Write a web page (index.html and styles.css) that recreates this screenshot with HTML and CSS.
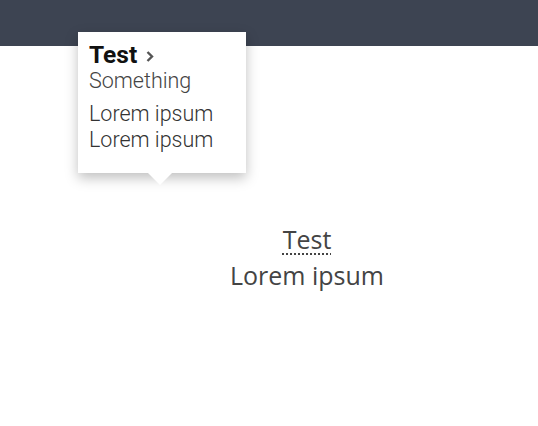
FILE: index.html
```html
<!DOCTYPE html>
<html lang="en">
<head>
  <meta charset="UTF-8" />
  <title>Popover</title>
  <link rel="stylesheet" href="styles.css">
</head>
<body>
  <header class="topbar"></header>

  <main class="content">
    <div class="target">
      <abbr class="term">Test</abbr>
      <div class="value">Lorem ipsum</div>
    </div>
  </main>

  <div class="popover">
    <div class="popover-title">Test <span class="chev">
      <svg width="10" height="13" viewBox="0 0 10 13"><path d="M2.5 2 L7 6.5 L2.5 11" fill="none" stroke="#555" stroke-width="2.4"/></svg>
    </span></div>
    <div class="popover-sub">Something</div>
    <div class="popover-body">
      <div>Lorem ipsum</div>
      <div>Lorem ipsum</div>
    </div>
  </div>
</body>
</html>
```

FILE: styles.css
```css
* { box-sizing: border-box; }
body {
  margin: 0;
  background: #fff;
  font-family: Roboto, sans-serif;
  min-height: 426px;
}
.topbar {
  height: 46px;
  background: #3d4452;
}
.content {
  display: flex;
  justify-content: center;
  padding: 175px 0 0 76px;
}
.target {
  text-align: center;
  font-family: "Open Sans", sans-serif;
  color: #444;
  font-size: 25px;
  line-height: 36px;
}
.term {
  text-decoration: underline dotted #444;
  text-underline-offset: 4px;
  text-decoration-thickness: 2px;
}
.popover {
  position: absolute;
  left: 78px;
  top: 32px;
  width: 168px;
  height: 141px;
  background: #fff;
  padding: 8px 11px;
  box-shadow: 0 5px 12px rgba(0,0,0,0.25);
}
.popover::after {
  content: "";
  position: absolute;
  left: 70px;
  bottom: -12px;
  border-left: 12px solid transparent;
  border-right: 12px solid transparent;
  border-top: 12px solid #fff;
}
.popover-title {
  font-weight: 700;
  font-size: 24.5px;
  line-height: 29px;
  color: #111;
}
.chev { display: inline-block; margin-left: 2px; }
.popover-sub {
  font-size: 21.5px;
  font-weight: 300;
  line-height: 24px;
  color: #444;
  margin-bottom: 8px;
}
.popover-body {
  font-size: 21.5px;
  font-weight: 300;
  line-height: 26px;
  color: #333;
}
```
